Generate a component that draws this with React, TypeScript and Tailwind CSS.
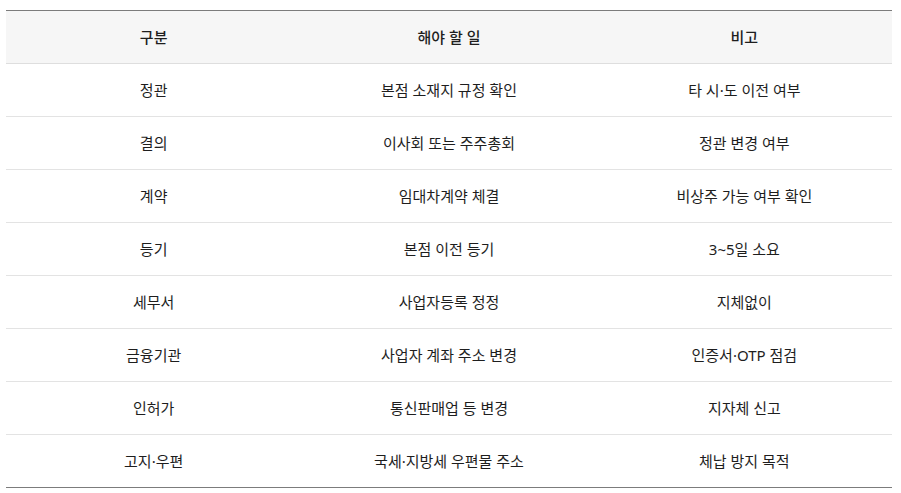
const rows: [string, string, string][] = [
  ["정관", "본점 소재지 규정 확인", "타 시·도 이전 여부"],
  ["결의", "이사회 또는 주주총회", "정관 변경 여부"],
  ["계약", "임대차계약 체결", "비상주 가능 여부 확인"],
  ["등기", "본점 이전 등기", "3~5일 소요"],
  ["세무서", "사업자등록 정정", "지체없이"],
  ["금융기관", "사업자 계좌 주소 변경", "인증서·OTP 점검"],
  ["인허가", "통신판매업 등 변경", "지자체 신고"],
  ["고지·우편", "국세·지방세 우편물 주소", "체납 방지 목적"],
];

const App = () => {
  return (
    <div className="w-[901px] h-[493px] bg-white pt-[10px] px-[6px] font-['Noto_Sans','Noto_Sans_CJK_KR',sans-serif] text-[15px] text-[#1e1e1e]">
      <table className="w-[886px] table-fixed border-collapse">
        <thead>
          <tr className="h-[53px] bg-[#f6f6f6] border-t border-t-[#7c7c7c] border-b border-b-[#dedede]">
            <th className="w-1/3 text-center font-medium">구분</th>
            <th className="w-1/3 text-center font-medium">해야 할 일</th>
            <th className="w-1/3 text-center font-medium">비고</th>
          </tr>
        </thead>
        <tbody>
          {rows.map((r, i) => (
            <tr
              key={r[0]}
              className={
                i === rows.length - 1
                  ? "h-[53px] border-b border-b-[#7c7c7c]"
                  : "h-[53px] border-b border-b-[#e3e3e3]"
              }
            >
              <td className="text-center">{r[0]}</td>
              <td className="text-center">{r[1]}</td>
              <td className="text-center">{r[2]}</td>
            </tr>
          ))}
        </tbody>
      </table>
    </div>
  );
};

export default App;
